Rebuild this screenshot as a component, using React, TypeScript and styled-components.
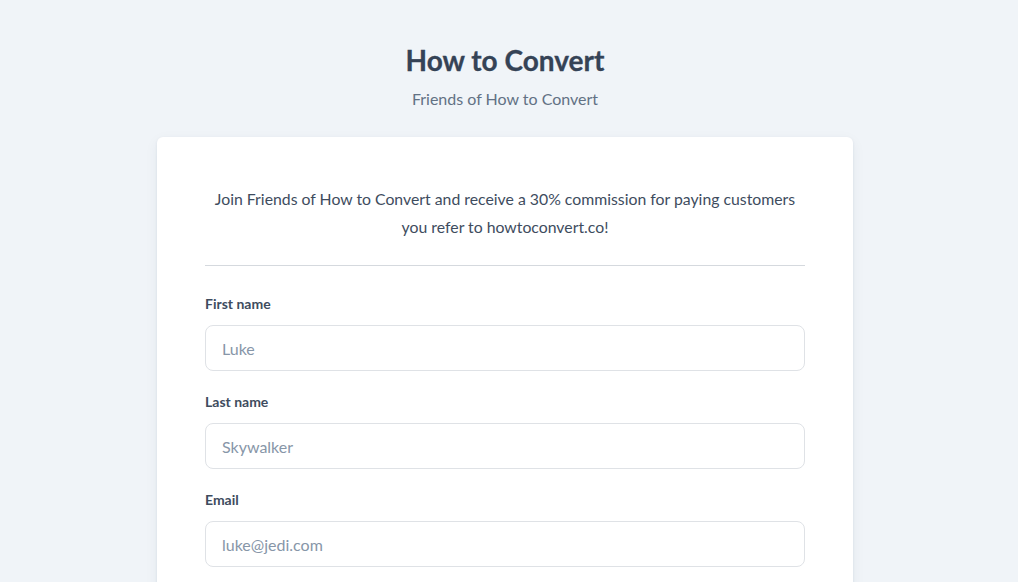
import styled, { createGlobalStyle } from "styled-components";

const GlobalStyle = createGlobalStyle`
  html, body {
    margin: 0;
    padding: 0;
    background: #f0f4f8;
    font-family: Lato, "Open Sans", sans-serif;
    -webkit-font-smoothing: antialiased;
  }
  * {
    box-sizing: border-box;
  }
`;

// reference was shot with a scrollbar, so the content centre sits 4px left
const Page = styled.main`
  display: flex;
  flex-direction: column;
  align-items: center;
  padding: 42px 8px 0 0;
  min-height: 582px;
`;

const Title = styled.h1`
  margin: 0;
  font-size: 28px;
  line-height: 36px;
  font-weight: 700;
  color: #354356;
  -webkit-text-stroke: 0.3px #354356;
`;

const Subtitle = styled.p`
  margin: 9px 0 0;
  font-size: 16px;
  line-height: 24px;
  color: #627184;
`;

const Card = styled.section`
  margin-top: 26px;
  width: 696px;
  background: #ffffff;
  border-radius: 6px;
  box-shadow: 0 1px 3px rgba(30, 50, 80, 0.08), 0 4px 14px rgba(30, 50, 80, 0.06);
  padding: 48px 48px 40px;
`;

const Intro = styled.p`
  margin: 0;
  text-align: center;
  font-size: 15.8px;
  line-height: 28px;
  color: #3e4c5e;
`;

const Divider = styled.hr`
  margin: 24px 0 29px;
  border: 0;
  border-top: 1px solid #d5d9de;
`;

const Form = styled.form`
  display: flex;
  flex-direction: column;
  gap: 22px;
`;

const Field = styled.div`
  display: flex;
  flex-direction: column;
  gap: 12px;
`;

const Label = styled.label`
  font-size: 14px;
  line-height: 18px;
  font-weight: 700;
  color: #3e4c5e;
`;

const Input = styled.input`
  height: 46px;
  padding: 0 16px;
  border: 1px solid #dfe2e6;
  border-radius: 8px;
  font-family: inherit;
  font-size: 16px;
  color: #3e4c5e;
  background: #fff;
  outline: none;

  &::placeholder {
    color: #8796a8;
  }
`;

const fields = [
  { id: "first", label: "First name", placeholder: "Luke", type: "text" },
  { id: "last", label: "Last name", placeholder: "Skywalker", type: "text" },
  { id: "email", label: "Email", placeholder: "luke@jedi.com", type: "email" },
];

export default function App() {
  return (
    <>
      <GlobalStyle />
      <Page>
        <Title>How to Convert</Title>
        <Subtitle>Friends of How to Convert</Subtitle>
        <Card>
          <Intro>
            Join Friends of How to Convert and receive a 30% commission for paying customers
            <br />
            you refer to howtoconvert.co!
          </Intro>
          <Divider />
          <Form>
            {fields.map((f) => (
              <Field key={f.id}>
                <Label htmlFor={f.id}>{f.label}</Label>
                <Input id={f.id} type={f.type} placeholder={f.placeholder} />
              </Field>
            ))}
          </Form>
        </Card>
      </Page>
    </>
  );
}
